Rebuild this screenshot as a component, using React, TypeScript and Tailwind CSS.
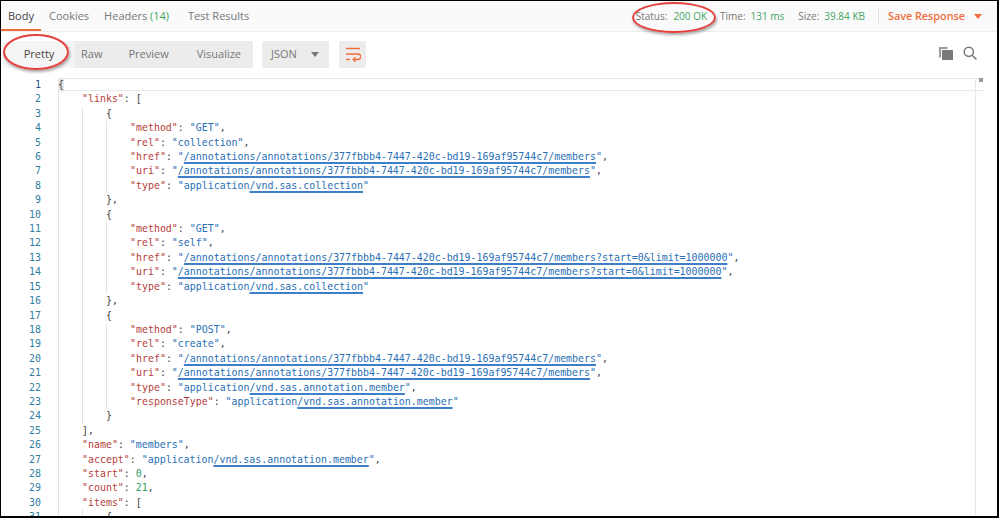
import React from 'react';

type Line = {
  indent: number;
  text?: string;
  key?: string;
  value?: string;
  number?: string;
  // part of the string value that gets the link underline
  link?: string;
  comma?: boolean;
};

const base = '/annotations/annotations/377fbbb4-7447-420c-bd19-169af95744c7/members';
const paged = base + '?start=0&limit=1000000';

const lines: Line[] = [
  { indent: 0, text: '{' },
  { indent: 1, key: 'links', text: ': [' },
  { indent: 2, text: '{' },
  { indent: 3, key: 'method', value: 'GET', comma: true },
  { indent: 3, key: 'rel', value: 'collection', comma: true },
  { indent: 3, key: 'href', value: base, link: base, comma: true },
  { indent: 3, key: 'uri', value: base, link: base, comma: true },
  { indent: 3, key: 'type', value: 'application/vnd.sas.collection', link: '/vnd.sas.collection' },
  { indent: 2, text: '},' },
  { indent: 2, text: '{' },
  { indent: 3, key: 'method', value: 'GET', comma: true },
  { indent: 3, key: 'rel', value: 'self', comma: true },
  { indent: 3, key: 'href', value: paged, link: paged, comma: true },
  { indent: 3, key: 'uri', value: paged, link: paged, comma: true },
  { indent: 3, key: 'type', value: 'application/vnd.sas.collection', link: '/vnd.sas.collection' },
  { indent: 2, text: '},' },
  { indent: 2, text: '{' },
  { indent: 3, key: 'method', value: 'POST', comma: true },
  { indent: 3, key: 'rel', value: 'create', comma: true },
  { indent: 3, key: 'href', value: base, link: base, comma: true },
  { indent: 3, key: 'uri', value: base, link: base, comma: true },
  { indent: 3, key: 'type', value: 'application/vnd.sas.annotation.member', link: '/vnd.sas.annotation.member', comma: true },
  { indent: 3, key: 'responseType', value: 'application/vnd.sas.annotation.member', link: '/vnd.sas.annotation.member' },
  { indent: 2, text: '}' },
  { indent: 1, text: '],' },
  { indent: 1, key: 'name', value: 'members', comma: true },
  { indent: 1, key: 'accept', value: 'application/vnd.sas.annotation.member', link: '/vnd.sas.annotation.member', comma: true },
  { indent: 1, key: 'start', number: '0', comma: true },
  { indent: 1, key: 'count', number: '21', comma: true },
  { indent: 1, key: 'items', text: ': [' },
  { indent: 2, text: '{' },
];

const CodeValue = ({ value, link }: { value: string; link?: string }) => {
  if (!link) return <span className="text-[#2a6fb5]">"{value}"</span>;
  const head = value.slice(0, value.length - link.length);
  return (
    <span className="text-[#2a6fb5]">
      "{head}
      <span className="underline decoration-[#3f7fc9] decoration-[1.5px] underline-offset-[2px] [text-decoration-skip-ink:none]">
        {link}
      </span>
      "
    </span>
  );
};

const CodeLine = ({ line, first }: { line: Line; first: boolean }) => (
  <div className="flex h-[14.42px] leading-[14.42px] whitespace-pre">
    {Array.from({ length: line.indent }).map((_, i) => (
      <span key={i} className="w-6 shrink-0 border-l border-[#e3e3e3]" />
    ))}
    <span className={first ? 'bg-[#e6e6e6] text-[#444]' : 'text-[#444]'}>
      {line.key && <span className="text-[#b5403c]">"{line.key}"</span>}
      {line.key && !line.text && ': '}
      {line.value && <CodeValue value={line.value} link={line.link} />}
      {line.number && <span className="text-[#2f9e6b]">{line.number}</span>}
      {line.text}
      {line.comma && ','}
    </span>
  </div>
);

const App = () => {
  return (
    <div className="relative h-[518px] w-[999px] overflow-hidden border-t border-r-2 border-b-2 border-l border-black bg-white font-['Open_Sans',sans-serif] text-[11px]">
      <div className="flex h-[31px] items-center justify-between border-b border-[#ececec] bg-[#fafafa] pr-[15px]">
        <div className="flex h-full items-center">
          <div className="flex h-full items-center border-b-2 border-[#f26b3a] px-[7px] pt-[2px] text-[#444]">Body</div>
          <div className="ml-[8px] text-[#777]">Cookies</div>
          <div className="ml-[15px] text-[#777]">
            Headers <span className="text-[#3fa764]">(14)</span>
          </div>
          <div className="ml-[19px] text-[#777]">Test Results</div>
        </div>
        <div className="flex items-center text-[10px]">
          <span className="text-[#777]">Status:</span>
          <span className="ml-[6px] text-[#3fa764]">200 OK</span>
          <span className="ml-[13px] text-[#777]">Time:</span>
          <span className="ml-[5px] text-[#3fa764]">131 ms</span>
          <span className="ml-[14px] text-[#777]">Size:</span>
          <span className="ml-[5px] text-[#3fa764]">39.84 KB</span>
          <span className="mr-[9px] ml-[13px] h-[16px] w-px bg-[#e4e4e4]" />
          <span className="text-[10.8px] font-semibold text-[#f26b3a]">Save Response</span>
          <span className="ml-[9px] h-0 w-0 border-x-[4px] border-t-[5px] border-x-transparent border-t-[#f26b3a]" />
        </div>
      </div>

      <div className="flex h-[46px] items-center pr-[20px] pb-px pl-[2px]">
        <div className="flex h-[27px] w-[250px] items-center rounded-[2px] bg-[#ececec] text-[#777]">
          <span className="flex h-full w-[72px] items-center justify-center rounded-[2px] bg-[#f5f5f5] text-[#444]">Pretty</span>
          <span className="ml-[6px]">Raw</span>
          <span className="ml-[26px]">Preview</span>
          <span className="ml-[28px]">Visualize</span>
        </div>
        <div className="ml-[9px] flex h-[27px] w-[67px] items-center rounded-[2px] bg-[#ececec] pl-[9px] text-[#777]">
          JSON
          <span className="ml-[14px] h-0 w-0 border-x-[4px] border-t-[5px] border-x-transparent border-t-[#777]" />
        </div>
        <div className="ml-[10px] flex h-[27px] w-[27px] items-center justify-center rounded-[2px] bg-[#ececec]">
          <svg width="16" height="15" viewBox="0 0 16 15" fill="none" stroke="#f26b3a" strokeWidth="1.4">
            <path d="M1 1.5h14" />
            <path d="M1 7h12a2.5 2.5 0 0 1 0 5.5H8.5" />
            <path d="M10.5 10.3 8.3 12.5l2.2 2.2" />
            <path d="M1 12.5h4" />
          </svg>
        </div>
        <div className="mb-[4px] ml-auto flex items-center gap-[10px]">
          <svg width="14" height="14" viewBox="0 0 14 14" fill="#7a7a7a">
            <path d="M0 1h8.5v2H3a1 1 0 0 0-1 1v7.5H0z" opacity="0.75" />
            <rect x="3" y="4" width="11" height="10" rx="0.5" />
          </svg>
          <svg width="14" height="14" viewBox="0 0 14 14" fill="none" stroke="#7a7a7a" strokeWidth="1.5">
            <circle cx="5.8" cy="5.8" r="4.6" />
            <path d="m9.2 9.2 4.2 4.2" />
          </svg>
        </div>
      </div>

      <div className="relative flex font-['DejaVu_Sans_Mono',monospace] text-[9.93px]">
        <div className="w-[57px] shrink-0 pr-[17px] text-right text-[#2f7fa0]">
          {lines.map((_, i) => (
            <div key={i} className={i === 0 ? 'h-[14.42px] leading-[14.42px] text-[#2c4f9a]' : 'h-[14.42px] leading-[14.42px]'}>
              {i + 1}
            </div>
          ))}
        </div>
        <div className="relative flex-1">
          <div className="absolute top-0 left-0 h-[13px] w-[927px] border-y border-[#e8e8e8]" />
          <div className="absolute top-0 left-[917px] h-[440px] border-l border-[#e8e8e8]" />
          <div className="absolute top-0 left-[921px] h-[4px] w-[4px] bg-[#999]" />
          {lines.map((line, i) => (
            <CodeLine key={i} line={line} first={i === 0} />
          ))}
        </div>
      </div>

      {/* red annotation circles */}
      <div className="absolute top-[33px] left-[2px] h-[36px] w-[66px] rounded-[50%] border-[2.5px] border-[#e5413c] shadow-[1px_2px_3px_rgba(0,0,0,0.35)]" />
      <div className="absolute top-px left-[631px] h-[31px] w-[84px] rounded-[50%] border-[2.5px] border-[#e5413c] shadow-[1px_2px_3px_rgba(0,0,0,0.35)]" />
    </div>
  );
};

export default App;
